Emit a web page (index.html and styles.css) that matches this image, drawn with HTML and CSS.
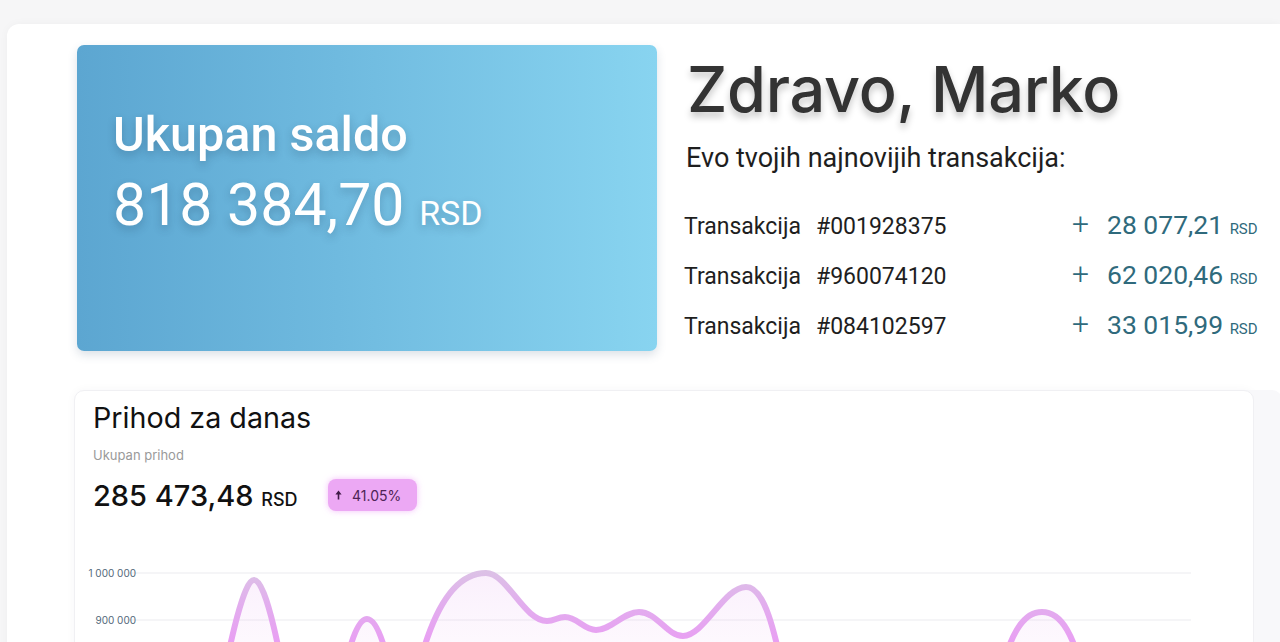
FILE: index.html
```html
<!DOCTYPE html>
<html lang="sr">
<head>
<meta charset="utf-8">
<title>Pregled</title>
<link rel="stylesheet" href="styles.css">
</head>
<body>
<main class="panel">
  <section class="top">
    <div class="balance">
      <h2 class="balance-title">Ukupan saldo</h2>
      <p class="balance-value">818 384,70 <span class="cur">RSD</span></p>
    </div>
    <div class="greeting">
      <h1 class="hello">Zdravo, Marko</h1>
      <p class="sub">Evo tvojih najnovijih transakcija:</p>
      <ul class="tx-list">
        <li class="tx"><span class="tx-label">Transakcija</span><span class="tx-id">#001928375</span><span class="tx-amount"><span class="plus">+</span>28 077,21 <span class="tx-cur">RSD</span></span></li>
        <li class="tx"><span class="tx-label">Transakcija</span><span class="tx-id">#960074120</span><span class="tx-amount"><span class="plus">+</span>62 020,46 <span class="tx-cur">RSD</span></span></li>
        <li class="tx"><span class="tx-label">Transakcija</span><span class="tx-id">#084102597</span><span class="tx-amount"><span class="plus">+</span>33 015,99 <span class="tx-cur">RSD</span></span></li>
      </ul>
    </div>
  </section>

  <section class="income">
    <h2 class="income-title">Prihod za danas</h2>
    <p class="income-label">Ukupan prihod</p>
    <div class="income-row">
      <p class="income-value">285 473,48 <span class="income-cur">RSD</span></p>
      <span class="badge"><svg class="arrow" width="7" height="10" viewBox="0 0 7 10" xmlns="http://www.w3.org/2000/svg"><path d="M3.5 0.5 L6.6 4.4 L4.3 4.4 L4.3 9.5 L2.7 9.5 L2.7 4.4 L0.4 4.4 Z" fill="#3e1a46"/></svg>41.05%</span>
    </div>
    <svg class="chart" width="1178" height="260" viewBox="0 0 1178 260" xmlns="http://www.w3.org/2000/svg">
      <defs>
        <linearGradient id="strokeGrad" gradientUnits="userSpaceOnUse" x1="0" y1="572" x2="0" y2="645">
          <stop offset="0" stop-color="#dcc1e6"/>
          <stop offset="0.45" stop-color="#e2adee"/>
          <stop offset="1" stop-color="#e99ef3"/>
        </linearGradient>
        <linearGradient id="fillGrad" gradientUnits="userSpaceOnUse" x1="0" y1="575" x2="0" y2="700">
          <stop offset="0" stop-color="#e9b3f2" stop-opacity="0.2"/>
          <stop offset="1" stop-color="#f3d9f7" stop-opacity="0.05"/>
        </linearGradient>
      </defs>
      <g transform="translate(-75 -540)">
        <line x1="128" y1="573" x2="1192" y2="573" class="grid"/>
        <line x1="128" y1="620" x2="1192" y2="620" class="grid"/>
        <line x1="128" y1="667" x2="1192" y2="667" class="grid"/>
        <text x="137" y="577" class="ylab" text-anchor="end">1 000 000</text>
        <text x="137" y="624" class="ylab" text-anchor="end">900 000</text>
        <path class="area" d="M 195 800 C 215 740, 238 580, 255 580 C 272 580, 292 720, 305 780 L 325 780 C 335 720, 350 619, 368 619 C 384 619, 396 690, 403 740 L 408 740 C 412 690, 432 573, 487 573 C 508 573, 525 621, 548 621 C 556 621, 558 617, 566 617 C 578 617, 585 630, 597 630 C 612 630, 625 612, 640 612 C 658 612, 668 636, 684 636 C 705 636, 725 587, 747 587 C 765 587, 775 625, 790 700 C 805 775, 975 790, 995 700 C 1010 630, 1025 612, 1043 612 C 1061 612, 1076 630, 1090 700 C 1100 750, 1150 720, 1192 680 L 1192 820 L 195 820 Z"/>
        <path class="line" d="M 195 800 C 215 740, 238 580, 255 580 C 272 580, 292 720, 305 780"/>
        <path class="line" d="M 325 780 C 335 720, 350 619, 368 619 C 384 619, 396 690, 403 740"/>
        <path class="line" d="M 408 740 C 412 690, 432 573, 487 573 C 508 573, 525 621, 548 621 C 556 621, 558 617, 566 617 C 578 617, 585 630, 597 630 C 612 630, 625 612, 640 612 C 658 612, 668 636, 684 636 C 705 636, 725 587, 747 587 C 765 587, 775 625, 790 700 C 805 775, 975 790, 995 700 C 1010 630, 1025 612, 1043 612 C 1061 612, 1076 630, 1090 700 C 1100 750, 1150 720, 1192 680"/>
      </g>
    </svg>
  </section>
</main>
</body>
</html>
```

FILE: styles.css
```css
* { box-sizing: border-box; }

html, body {
  margin: 0;
  padding: 0;
}

body {
  background: #f6f6f7;
  font-family: Roboto, "Liberation Sans", sans-serif;
  overflow: hidden;
  height: 642px;
}

.panel {
  margin: 24px 0 0 7px;
  background: #ffffff;
  border-radius: 12px 0 0 0;
  box-shadow: 0 0 10px rgba(0, 0, 0, 0.035);
  padding: 21px 0 0 67px;
  min-height: 700px;
}

.top {
  display: flex;
  align-items: flex-start;
  gap: 27px;
  height: 306px;
}

.balance {
  margin-left: 3px;
  width: 580px;
  height: 306px;
  flex: none;
  border-radius: 7px;
  background: linear-gradient(90deg, #5ca6d1 0%, #6fbadf 45%, #88d4f0 100%);
  box-shadow: 0 4px 10px rgba(60, 90, 120, 0.18);
  padding: 62px 0 0 36px;
  color: #ffffff;
}

.balance-title {
  margin: 0;
  font-size: 48.5px;
  font-weight: 500;
  line-height: 56px;
  text-shadow: 0 4px 8px rgba(30, 60, 90, 0.28);
}

.balance-value {
  margin: 9px 0 0 0;
  font-size: 59px;
  font-weight: 400;
  line-height: 66px;
  text-shadow: 0 4px 8px rgba(30, 60, 90, 0.28);
}

.balance-value .cur {
  font-size: 34px;
}

.greeting {
  flex: 1;
}

.hello {
  margin: 0 0 0 3px;
  font-family: Inter, "Liberation Sans", sans-serif;
  font-size: 63px;
  font-weight: 500;
  line-height: 88px;
  color: #333333;
  letter-spacing: -0.3px;
  text-shadow: 0 5px 7px rgba(0, 0, 0, 0.22);
}

.sub {
  margin: 9px 0 0 2px;
  font-size: 27px;
  line-height: 32px;
  color: #1e1e1e;
}

.tx-list {
  list-style: none;
  margin: 32px 0 0 0;
  padding: 0;
}

.tx {
  display: grid;
  grid-template-columns: 132px 256px auto;
  align-items: baseline;
  height: 50px;
  font-size: 23px;
  color: #1e1e1e;
}

.tx-amount {
  font-size: 26.5px;
  color: #2f6a7c;
  font-weight: 400;
}

.plus {
  display: inline-block;
  width: 35px;
  font-size: 30px;
  font-weight: 300;
}

.tx-cur {
  font-size: 15px;
  font-weight: 400;
}

.income {
  margin: 39px 0 0 0;
  width: 1180px;
  height: 400px;
  border: 1px solid #f0f0f3;
  border-radius: 10px;
  box-shadow: 28px 0 0 0 #f8f8fa, 0 0 10px rgba(30, 30, 70, 0.04);
  background: #ffffff;
  padding: 7px 0 0 18px;
  font-family: Inter, "Liberation Sans", sans-serif;
}

.income-title {
  margin: 0;
  font-size: 28.7px;
  font-weight: 400;
  line-height: 40px;
  color: #111111;
}

.income-label {
  margin: 9px 0 0 0;
  font-size: 13px;
  line-height: 16px;
  color: #9a9a9a;
}

.income-row {
  display: flex;
  align-items: center;
  margin-top: 14px;
  height: 36px;
}

.income-value {
  margin: 0;
  width: 235px;
  font-size: 29px;
  font-weight: 500;
  color: #111111;
}

.income-cur {
  font-size: 18px;
}

.badge {
  display: inline-flex;
  align-items: center;
  gap: 10px;
  height: 32px;
  padding: 0 16px 0 7px;
  border-radius: 8px;
  background: #eca8f4;
  box-shadow: 0 0 6px rgba(236, 150, 246, 0.6);
  font-size: 14px;
  color: #4e2456;
}

.arrow {
  display: block;
}

.chart {
  display: block;
  margin: 27px 0 0 -19px;
}

.grid {
  stroke: #ebebef;
  stroke-width: 1;
}

.ylab {
  font-family: Inter, "Liberation Sans", sans-serif;
  font-size: 10px;
  fill: #52687a;
}

.line {
  fill: none;
  stroke: url(#strokeGrad);
  stroke-width: 6;
  stroke-linecap: round;
  stroke-linejoin: round;
}

.area {
  fill: url(#fillGrad);
  stroke: none;
}
```
